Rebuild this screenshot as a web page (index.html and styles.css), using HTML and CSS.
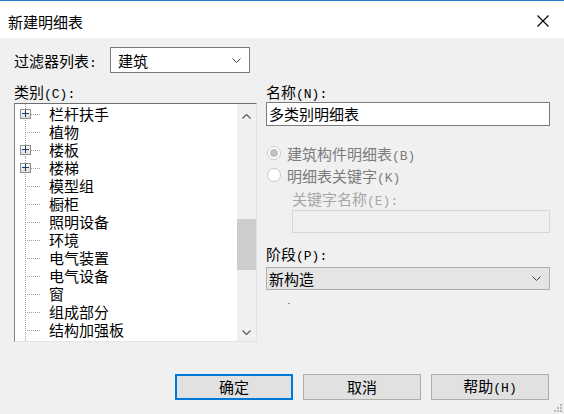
FILE: index.html
```html
<!DOCTYPE html>
<html lang="zh">
<head>
  <meta charset="UTF-8" />
  <title>新建明细表</title>
  <link rel="stylesheet" href="styles.css">
</head>
<body>
  <div class="dialog">
    <div class="titlebar">
      <span class="title">新建明细表</span>
      <svg class="close" width="12" height="12" viewBox="0 0 12 12">
        <path d="M0.5 0.5 L11.5 11.5 M11.5 0.5 L0.5 11.5" stroke="#000" stroke-width="1.1" fill="none"/>
      </svg>
    </div>

    <div class="content">
      <div class="filter-row">
        <span class="filter-label">过滤器列表<span class="mn">:</span></span>
        <div class="combo">
          <span>建筑</span>
          <svg class="chev" width="9" height="5" viewBox="0 0 9 5"><path d="M0.5 0.5 L4.5 4.5 L8.5 0.5" stroke="#444" fill="none"/></svg>
        </div>
      </div>

      <div class="columns">
        <div class="left-col">
          <div class="label">类别<span class="mn">(C):</span></div>
          <div class="listbox">
            <div class="tree" id="tree"></div>
            <div class="scrollbar">
              <svg class="arrow" width="9" height="5" viewBox="0 0 9 5"><path d="M0.5 4.5 L4.5 0.5 L8.5 4.5" stroke="#606060" stroke-width="1.3" fill="none"/></svg>
              <div class="track"><div class="thumb"></div></div>
              <svg class="arrow" width="9" height="5" viewBox="0 0 9 5"><path d="M0.5 0.5 L4.5 4.5 L8.5 0.5" stroke="#606060" stroke-width="1.3" fill="none"/></svg>
            </div>
          </div>
        </div>

        <div class="right-col">
          <div class="label">名称<span class="mn">(N):</span></div>
          <div class="textbox">多类别明细表</div>

          <div class="radio-row first">
            <span class="radio checked"></span>
            <span>建筑构件明细表<span class="mn">(B)</span></span>
          </div>
          <div class="radio-row">
            <span class="radio"></span>
            <span>明细表关键字<span class="mn">(K)</span></span>
          </div>

          <div class="sub">
            <div class="label disabled">关键字名称<span class="mn">(E):</span></div>
            <div class="textbox off"></div>
          </div>

          <div class="label stage">阶段<span class="mn">(P):</span></div>
          <div class="combo wide">
            <span>新构造</span>
            <svg class="chev" width="9" height="5" viewBox="0 0 9 5"><path d="M0.5 0.5 L4.5 4.5 L8.5 0.5" stroke="#444" fill="none"/></svg>
          </div>
          <span class="dot"></span>
        </div>
      </div>

      <div class="buttons">
        <button class="default">确定</button>
        <button>取消</button>
        <button>帮助<span class="mn">(H)</span></button>
      </div>
    </div>
    <svg class="grip" width="10" height="10" viewBox="0 0 10 10">
      <rect x="8" y="2" width="2" height="2" fill="#b8b8b8"/>
      <rect x="5" y="5" width="2" height="2" fill="#b8b8b8"/>
      <rect x="8" y="5" width="2" height="2" fill="#b8b8b8"/>
      <rect x="2" y="8" width="2" height="2" fill="#b8b8b8"/>
      <rect x="5" y="8" width="2" height="2" fill="#b8b8b8"/>
      <rect x="8" y="8" width="2" height="2" fill="#b8b8b8"/>
    </svg>
  </div>

  <script>
    // 类别列表: [名称, 是否可展开]
    const categorias = [
      ["栏杆扶手", true],
      ["植物", false],
      ["楼板", true],
      ["楼梯", true],
      ["模型组", false],
      ["橱柜", false],
      ["照明设备", false],
      ["环境", false],
      ["电气装置", false],
      ["电气设备", false],
      ["窗", false],
      ["组成部分", false],
      ["结构加强板", false],
      ["结构柱", false]
    ];

    const tree = document.getElementById("tree");
    categorias.forEach(([nombre, expandible]) => {
      const row = document.createElement("div");
      row.className = "node";
      row.innerHTML = `
        <span class="branch">${expandible ? '<span class="plus"></span>' : ""}</span>
        <span class="name">${nombre}</span>
      `;
      tree.appendChild(row);
    });
  </script>
</body>
</html>
```

FILE: styles.css
```css
body {
  margin: 0;
  font-family: "Noto Sans CJK SC", "Liberation Sans", sans-serif;
  font-size: 15px;
  color: #000;
  background-color: #f0f0f0;
}

.mn {
  font-family: "Liberation Mono", monospace;
  font-size: 13px;
}

.dialog {
  width: 564px;
  height: 414px;
  position: relative;
  overflow: hidden;
  background-color: #f0f0f0;
}

.titlebar {
  height: 37px;
  border-top: 1px solid #2b79d0;
  background-color: #fff;
  display: flex;
  align-items: center;
  justify-content: space-between;
  padding: 0 15px 0 8px;
}

.title {
  line-height: 18px;
  margin-top: 5px;
}

.close {
  margin-top: 2px;
}

.content {
  padding: 9px 14px 0 14px;
}

.filter-row {
  display: flex;
  align-items: center;
  height: 26px;
}

.filter-label {
  width: 96px;
}

.combo {
  box-sizing: border-box;
  width: 140px;
  height: 26px;
  border: 1px solid #7a7a7a;
  background-color: #fff;
  display: flex;
  align-items: center;
  justify-content: space-between;
  padding: 0 8px 0 7px;
}

.columns {
  display: flex;
  align-items: flex-start;
  gap: 9px;
  margin-top: 10px;
}

.label {
  height: 18px;
  line-height: 18px;
}

.left-col {
  width: 243px;
}

.listbox {
  box-sizing: border-box;
  margin-top: 2px;
  height: 239px;
  border: 1px solid;
  border-color: #6e6e6e #e3e3e3 #e3e3e3 #828282;
  background-color: #fff;
  display: flex;
  overflow: hidden;
}

.tree {
  flex: 1;
  padding-top: 1px;
  position: relative;
  background-image: linear-gradient(#a0a0a0 50%, transparent 50%);
  background-size: 1px 2px;
  background-repeat: repeat-y;
  background-position: 10px 0;
}

.node {
  height: 18px;
  display: flex;
  align-items: center;
}

.branch {
  position: relative;
  box-sizing: border-box;
  width: 20px;
  height: 18px;
  margin-left: 10px;
  padding-right: 4px;
  background-image: linear-gradient(90deg, #a0a0a0 50%, transparent 50%);
  background-size: 2px 1px;
  background-repeat: repeat-x;
  background-position: 0 9px;
  background-clip: content-box;
}

.plus {
  position: absolute;
  left: -5px;
  top: 4px;
  width: 11px;
  height: 10px;
  box-sizing: border-box;
  border: 1px solid #8e8f8f;
  background: linear-gradient(#ffffff, #dcdcdc);
}

.plus::before,
.plus::after {
  content: "";
  position: absolute;
  background-color: #1c3a6e;
}

.plus::before {
  left: 1px;
  top: 3px;
  width: 7px;
  height: 1px;
}

.plus::after {
  left: 4px;
  top: 0;
  width: 1px;
  height: 7px;
}

.name {
  margin-left: 4px;
  white-space: nowrap;
  line-height: 18px;
}

.scrollbar {
  width: 19px;
  background-color: #f0f0f0;
  display: flex;
  flex-direction: column;
  align-items: center;
}

.arrow {
  margin: 10px 0 7px;
}

.arrow:last-child {
  margin: 7px 0 6px;
}

.track {
  flex: 1;
  width: 100%;
  position: relative;
}

.thumb {
  position: absolute;
  left: 0;
  right: 0;
  top: 93px;
  height: 51px;
  background-color: #cdcdcd;
}

.right-col {
  width: 284px;
}

.textbox {
  box-sizing: border-box;
  margin-top: 1px;
  height: 24px;
  border: 1px solid #7a7a7a;
  background-color: #fff;
  padding-left: 2px;
  line-height: 22px;
}

.radio-row {
  display: flex;
  align-items: center;
  height: 22px;
  color: #7c7c7c;
}

.radio-row.first {
  margin-top: 16px;
}

.radio {
  box-sizing: border-box;
  width: 14px;
  height: 14px;
  border-radius: 50%;
  border: 1px solid #c8c8c8;
  background-color: #fff;
  margin: 0 6px 0 1px;
  position: relative;
}

.radio.checked::after {
  content: "";
  position: absolute;
  left: 2px;
  top: 2px;
  width: 8px;
  height: 8px;
  border-radius: 50%;
  background-color: #c0c0c0;
}

.sub {
  margin: 4px 0 0 26px;
}

.label.disabled {
  color: #a6a6a6;
}

.textbox.off {
  margin-top: 2px;
  height: 23px;
  border-color: #d6d6d6;
  background-color: #f0f0f0;
}

.label.stage {
  margin-top: 12px;
}

.combo.wide {
  width: 284px;
  height: 23px;
  margin-top: 4px;
  border-color: #adadad;
  background-color: #e5e5e5;
  padding: 0 8px 0 2px;
}

.dot {
  display: block;
  width: 2px;
  height: 1px;
  margin: 13px 0 0 22px;
  background-color: #5aa0d8;
}

.buttons {
  display: flex;
  justify-content: flex-end;
  gap: 10px;
  margin-top: 32px;
  padding-right: 1px;
}

button {
  box-sizing: border-box;
  width: 118px;
  height: 26px;
  font-family: "Noto Sans CJK SC", "Liberation Sans", sans-serif;
  font-size: 15px;
  background-color: #e1e1e1;
  border: 1px solid #adadad;
  padding: 0;
  line-height: 22px;
  color: #000;
}

button.default {
  border: 2px solid #0078d7;
}

.grip {
  position: absolute;
  right: 2px;
  bottom: 2px;
}
```
